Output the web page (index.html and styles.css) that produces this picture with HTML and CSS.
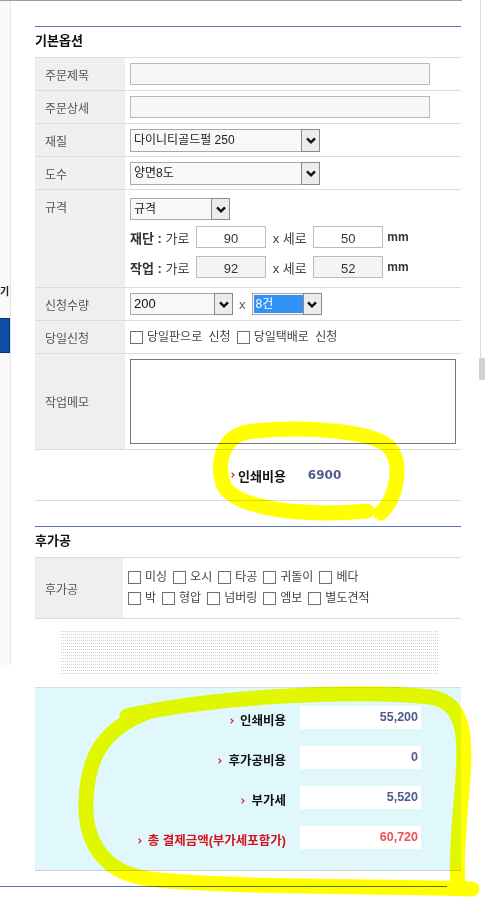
FILE: index.html
```html
<!DOCTYPE html>
<html lang="ko">
  <head>
    <meta charset="UTF-8" />
    <meta name="viewport" content="width=device-width, initial-scale=1.0" />
    <title>주문옵션</title>
    <link rel="stylesheet" href="styles.css">
  </head>
  <body>
    <div class="topline"></div>
    <div class="page">
      <div class="side">
        <div class="side-text">기</div>
        <div class="side-btn"></div>
      </div>

      <div class="main">
        <h3 class="sec-title">기본옵션</h3>

        <div class="row">
          <div class="lab">주문제목</div>
          <div class="fld"><input class="txt" type="text"></div>
        </div>
        <div class="row">
          <div class="lab">주문상세</div>
          <div class="fld"><input class="txt" type="text"></div>
        </div>
        <div class="row">
          <div class="lab">재질</div>
          <div class="fld">
            <div class="sel w190">
              <span class="val">다이니티골드펄 250</span>
              <span class="arr"><svg width="10" height="7" viewBox="0 0 10 7"><path d="M1 1.3 L5 5.3 L9 1.3" /></svg></span>
            </div>
          </div>
        </div>
        <div class="row">
          <div class="lab">도수</div>
          <div class="fld">
            <div class="sel w190">
              <span class="val">양면8도</span>
              <span class="arr"><svg width="10" height="7" viewBox="0 0 10 7"><path d="M1 1.3 L5 5.3 L9 1.3" /></svg></span>
            </div>
          </div>
        </div>
        <div class="row tall">
          <div class="lab top">규격</div>
          <div class="fld stack">
            <div class="sel w100">
              <span class="val">규격</span>
              <span class="arr"><svg width="10" height="7" viewBox="0 0 10 7"><path d="M1 1.3 L5 5.3 L9 1.3" /></svg></span>
            </div>
            <div class="size-line first">
              <b>재단 :</b>&nbsp;가로 <input class="num" type="text" value="90"> x 세로 <input class="num" type="text" value="50"> <b class="mm">mm</b>
            </div>
            <div class="size-line">
              <b>작업 :</b>&nbsp;가로 <input class="num ro" type="text" value="92" readonly> x 세로 <input class="num ro" type="text" value="52" readonly> <b class="mm">mm</b>
            </div>
          </div>
        </div>
        <div class="row">
          <div class="lab">신청수량</div>
          <div class="fld qty">
            <div class="sel w103">
              <span class="val dark">200</span>
              <span class="arr"><svg width="10" height="7" viewBox="0 0 10 7"><path d="M1 1.3 L5 5.3 L9 1.3" /></svg></span>
            </div>
            <span class="times">x</span>
            <div class="sel w70">
              <span class="val on">8건</span>
              <span class="arr"><svg width="10" height="7" viewBox="0 0 10 7"><path d="M1 1.3 L5 5.3 L9 1.3" /></svg></span>
            </div>
          </div>
        </div>
        <div class="row">
          <div class="lab">당일신청</div>
          <div class="fld">
            <label class="chk"><input class="cb" type="checkbox">당일판으로 신청</label>
            <label class="chk"><input class="cb" type="checkbox">당일택배로 신청</label>
          </div>
        </div>
        <div class="row memo-row">
          <div class="lab">작업메모</div>
          <div class="fld"><textarea class="memo"></textarea></div>
        </div>
        <div class="row cost">
          <svg class="mk" width="4" height="6" viewBox="0 0 4 6"><path d="M0.6 0.6 L3 3 L0.6 5.4" /></svg>
          <b>인쇄비용</b>
          <span class="cost-val">6900</span>
        </div>

        <h3 class="sec-title">후가공</h3>

        <div class="row post">
          <div class="lab">후가공</div>
          <div class="fld checks">
            <div class="check-line">
              <label class="chk"><input class="cb" type="checkbox">미싱</label>
              <label class="chk"><input class="cb" type="checkbox">오시</label>
              <label class="chk"><input class="cb" type="checkbox">타공</label>
              <label class="chk"><input class="cb" type="checkbox">귀돌이</label>
              <label class="chk"><input class="cb" type="checkbox">베다</label>
            </div>
            <div class="check-line">
              <label class="chk"><input class="cb" type="checkbox">박</label>
              <label class="chk"><input class="cb" type="checkbox">형압</label>
              <label class="chk"><input class="cb" type="checkbox">넘버링</label>
              <label class="chk"><input class="cb" type="checkbox">엠보</label>
              <label class="chk"><input class="cb" type="checkbox">별도견적</label>
            </div>
          </div>
        </div>
        <div class="dots-row">
          <div class="dots"></div>
        </div>

        <div class="sum">
          <div class="sum-row">
            <span class="sum-lab"><svg class="mk" width="4" height="6" viewBox="0 0 4 6"><path d="M0.6 0.6 L3 3 L0.6 5.4" /></svg>인쇄비용</span>
            <span class="sum-box">55,200</span>
          </div>
          <div class="sum-row">
            <span class="sum-lab"><svg class="mk" width="4" height="6" viewBox="0 0 4 6"><path d="M0.6 0.6 L3 3 L0.6 5.4" /></svg>후가공비용</span>
            <span class="sum-box">0</span>
          </div>
          <div class="sum-row">
            <span class="sum-lab"><svg class="mk" width="4" height="6" viewBox="0 0 4 6"><path d="M0.6 0.6 L3 3 L0.6 5.4" /></svg>부가세</span>
            <span class="sum-box">5,520</span>
          </div>
          <div class="sum-row total">
            <span class="sum-lab"><svg class="mk" width="4" height="6" viewBox="0 0 4 6"><path d="M0.6 0.6 L3 3 L0.6 5.4" /></svg>총 결제금액(부가세포함가)</span>
            <span class="sum-box">60,720</span>
          </div>
        </div>
      </div>

      <div class="rail">
        <div class="rail-line"></div>
        <div class="rail-thumb"></div>
      </div>
    </div>
    <div class="bottomline"></div>

    <!-- highlighter marks drawn over the form -->
    <svg class="marker" width="485" height="902" viewBox="0 0 485 902">
      <path d="M381 513 C397 497 404 462 388 446 C368 429 292 426 247 432 C221 437 216 466 224 486 C236 508 300 517 367 511" />
      <path d="M127 716 C210 697 350 689 430 697 C468 702 466 745 462 790 C458 835 456 865 458 885" />
      <path d="M472 889 C390 886 230 888 150 879 C102 873 84 840 86 800 C88 760 100 730 148 712" />
    </svg>
  </body>
</html>
```

FILE: styles.css
```css
* {
  box-sizing: border-box;
}
body {
  margin: 0;
  width: 485px;
  height: 902px;
  overflow: hidden;
  position: relative;
  background: #fff;
  font-family: "Liberation Sans", "Noto Sans CJK KR", sans-serif;
  font-size: 12px;
  color: #333;
}
.topline {
  width: 462px;
  height: 1px;
  background: #9d9d9d;
}
.page {
  display: flex;
  align-items: flex-start;
}

/* cut-off sidebar on the left */
.side {
  width: 11px;
  height: 664px;
  flex: none;
  background: #f9f9f9;
  border-right: 1px solid #e4e4e4;
}
.side-text {
  margin-top: 284px;
  font-size: 10px;
  font-weight: bold;
  line-height: 14px;
  color: #222;
}
.side-btn {
  width: 10px;
  height: 35px;
  margin-top: 19px;
  background: #0b4ea3;
  border: 1px solid #063474;
  border-left: 0;
}

.main {
  width: 426px;
  flex: none;
  margin-left: 24px;
  padding-top: 25px;
}
.sec-title {
  margin: 0;
  height: 31px;
  border-top: 1px solid #5a72b6;
  font-size: 13px;
  font-weight: bold;
  line-height: 28px;
  color: #111;
}
.row {
  display: flex;
  height: 33px;
  border-top: 1px solid #dcdcdc;
}
.lab {
  width: 90px;
  flex: none;
  display: flex;
  align-items: center;
  padding-left: 10px;
  background: #efefef;
  color: #555;
  font-size: 12px;
}
.lab.top {
  align-items: flex-start;
  padding-top: 9px;
  line-height: 18px;
}
.fld {
  flex: 1;
  display: flex;
  align-items: center;
  padding: 0 5px;
}
.txt {
  width: 300px;
  height: 22px;
  margin: 0;
  border: 1px solid #b9b9b9;
  background: #f6f6f6;
}

/* select boxes */
.sel {
  display: flex;
  height: 23px;
  border: 1px solid #a9a9a9;
  background: #f8f8f8;
}
.w190 {
  width: 190px;
}
.w100 {
  width: 100px;
  height: 22px;
}
.w103 {
  width: 103px;
  height: 22px;
}
.w70 {
  width: 70px;
  height: 22px;
}
.val {
  flex: 1;
  padding-left: 3px;
  font-size: 12px;
  line-height: 20px;
  color: #222;
  white-space: nowrap;
}
.val.dark {
  font-size: 13px;
  color: #111;
}
.val.on {
  margin: 1px 0 1px 1px;
  padding-left: 2px;
  line-height: 18px;
  background: #3492f5;
  color: #fff;
}
.arr {
  width: 19px;
  flex: none;
  display: flex;
  align-items: center;
  justify-content: center;
  margin: -1px -1px -1px 0;
  border: 1px solid #8a8a8a;
  background: #ececec;
}
.arr path {
  fill: none;
  stroke: #111;
  stroke-width: 2.4;
}

.row.tall {
  height: 98px;
}
.fld.stack {
  flex-direction: column;
  align-items: flex-start;
  padding-top: 8px;
}
.size-line {
  display: flex;
  align-items: center;
  margin-top: 8px;
  font-size: 13px;
  color: #444;
  white-space: pre;
}
.size-line.first {
  margin-top: 6px;
}
.size-line b {
  color: #333;
}
.num {
  width: 70px;
  height: 22px;
  margin: 0 3px;
  padding: 3px 0 0;
  border: 1px solid #bcbcbc;
  background: #fff;
  font-family: "Liberation Sans", sans-serif;
  font-size: 13px;
  text-align: center;
  color: #333;
}
.num.ro {
  background: #f4f4f4;
}
.mm {
  margin-left: 1px;
  color: #555;
  font-size: 12px;
}
.fld.qty {
  gap: 6px;
}
.times {
  font-size: 13px;
  color: #555;
}

/* checkboxes */
.chk {
  display: inline-flex;
  align-items: center;
  margin-right: 6px;
  font-size: 12px;
  line-height: 21px;
  color: #444;
  word-spacing: 3px;
}
.cb {
  appearance: none;
  width: 13px;
  height: 13px;
  flex: none;
  margin: 0 4px 0 0;
  border: 1px solid #707070;
  background: #fff;
}

.row.memo-row {
  height: 96px;
}
.memo {
  width: 326px;
  height: 85px;
  margin: 0;
  border: 1px solid #777;
  background: #fff;
  resize: none;
}

.row.cost {
  height: 52px;
  align-items: center;
  padding-left: 196px;
  margin-bottom: 25px;
  border-bottom: 1px solid #dcdcdc;
  font-size: 13px;
  color: #111;
}
.mk {
  flex: none;
  margin-right: 3px;
}
.mk path {
  fill: none;
  stroke: #c8262c;
  stroke-width: 1.2;
}
.cost-val {
  margin-left: 22px;
  font-family: "DejaVu Sans", sans-serif;
  font-weight: bold;
  font-size: 12px;
  color: #4d5d8f;
}

.row.post {
  height: 61px;
}
.row.post .lab {
  width: 88px;
}
.fld.checks {
  flex-direction: column;
  align-items: flex-start;
  justify-content: center;
}
.check-line {
  display: flex;
}

.dots-row {
  height: 70px;
  padding: 10px 0 11px 25px;
  border-top: 1px solid #dcdcdc;
  border-bottom: 1px solid #dcdcdc;
}
.dots {
  width: 378px;
  height: 47px;
  background-color: #fff;
  background-image: linear-gradient(90deg, #fff 1px, transparent 1px), linear-gradient(transparent 2px, #d0d0d0 2px);
  background-size: 2px 3px;
}

/* totals */
.sum {
  padding: 18px 40px 21px 0;
  background: #e0f7fc;
  border-bottom: 1px solid #cfcfcf;
}
.sum-row {
  display: flex;
  justify-content: flex-end;
  align-items: flex-end;
  gap: 14px;
  height: 23px;
  margin-bottom: 17px;
}
.sum-row.total {
  margin-bottom: 0;
}
.sum-lab {
  display: flex;
  align-items: center;
  line-height: 16px;
  font-size: 12.5px;
  font-weight: bold;
  color: #111;
}
.sum-lab .mk {
  margin-right: 6px;
}
.sum-box {
  width: 121px;
  height: 23px;
  padding-right: 3px;
  background: #fff;
  text-align: right;
  font-weight: bold;
  font-size: 12.5px;
  line-height: 23px;
  color: #4a5a8a;
}
.total .sum-lab {
  color: #d3121c;
}
.total .sum-box {
  color: #e8505a;
}

.rail {
  width: 6px;
  flex: none;
  margin-left: 18px;
  margin-top: -1px;
}
.rail-line {
  width: 1px;
  height: 358px;
  margin-left: 1px;
  background: #dadada;
}
.rail-thumb {
  height: 22px;
  background: #d2d2d2;
}

.bottomline {
  width: 447px;
  height: 1px;
  margin-top: 15px;
  background: #5a72b6;
}

.marker {
  position: absolute;
  left: 0;
  top: 0;
  pointer-events: none;
  mix-blend-mode: multiply;
}
.marker path {
  fill: none;
  stroke: #ffff00;
  stroke-width: 15;
  stroke-linecap: round;
}
```
